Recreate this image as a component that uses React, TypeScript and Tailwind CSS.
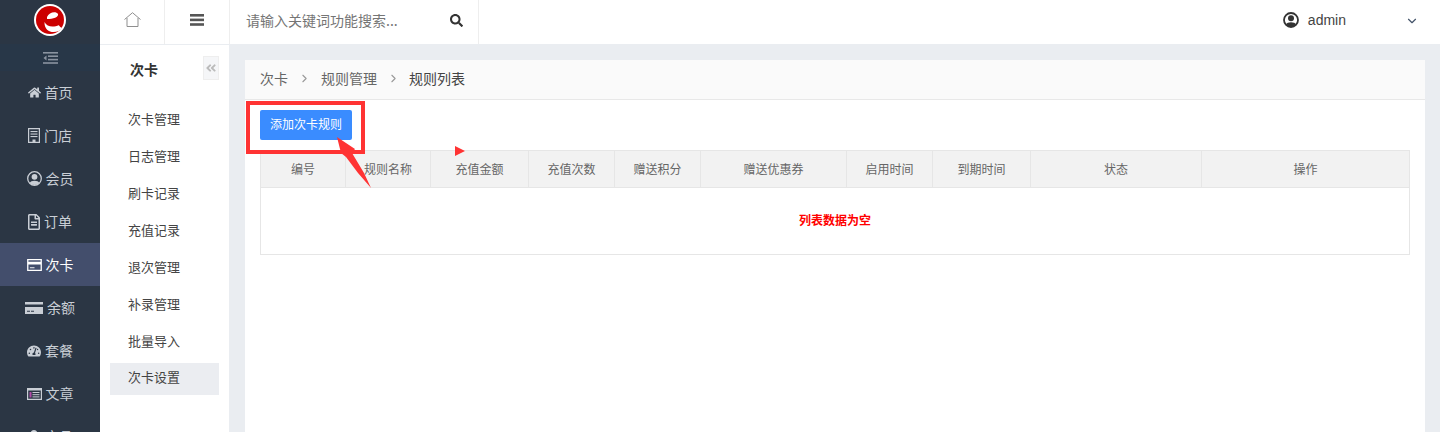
import React from "react";
import { FaHome, FaRegFileAlt, FaTachometerAlt, FaSearch, FaUser, FaAngleDoubleLeft } from "react-icons/fa";
import { LuChevronDown, LuChevronRight } from "react-icons/lu";

const StoreIcon = () => (
  <svg width="12" height="15" viewBox="0 0 12 15" fill="currentColor">
    <path d="M0 0H12V15H0ZM1.2 1.2V13.8H4.5V11.5H7.5V13.8H10.8V1.2Z" fillRule="evenodd" />
    <rect x="2.5" y="3" width="7" height="1.1" />
    <rect x="2.5" y="5.5" width="7" height="1.1" />
    <rect x="2.5" y="8" width="7" height="1.1" />
  </svg>
);

const MemberIcon = () => (
  <svg width="15" height="15" viewBox="0 0 15 15">
    <circle cx="7.5" cy="7.5" r="6.8" fill="none" stroke="currentColor" strokeWidth="1.3" />
    <circle cx="7.5" cy="5.8" r="2.9" fill="currentColor" />
    <path d="M2.8 12 C3.5 9 11.5 9 12.2 12 C10 14.5 5 14.5 2.8 12Z" fill="currentColor" />
  </svg>
);

const CardIcon = () => (
  <svg width="15" height="12" viewBox="0 0 16 13" fill="currentColor">
    <path d="M0 0H16V13H0ZM1.4 6V11.6H14.6V6ZM1.4 1.4V3H14.6V1.4Z" fillRule="evenodd" />
    <rect x="3" y="9" width="5" height="1" />
  </svg>
);

const BalanceIcon = () => (
  <svg width="18" height="12" viewBox="0 0 18 12" fill="currentColor">
    <rect x="0" y="0" width="18" height="2.5" />
    <path d="M0 5H18V12H0ZM2 8.8V9.8H5V8.8ZM6 8.8V9.8H9V8.8Z" fillRule="evenodd" />
  </svg>
);

const ArticleIcon = () => (
  <svg width="15" height="12" viewBox="0 0 15 12" fill="currentColor">
    <path d="M0 0H15V12H0ZM1.2 2.6V10.8H13.8V2.6Z" fillRule="evenodd" />
    <rect x="2.5" y="4" width="2" height="5.5" fill="#b04aa8" />
    <rect x="5.5" y="4" width="7" height="1" />
    <rect x="5.5" y="6.2" width="7" height="1" />
    <rect x="5.5" y="8.4" width="7" height="1" />
  </svg>
);

const navItems = [
  { label: "首页", icon: <FaHome size={13} /> },
  { label: "门店", icon: <StoreIcon /> },
  { label: "会员", icon: <MemberIcon /> },
  { label: "订单", icon: <FaRegFileAlt size={16} className="w-[12px]" /> },
  { label: "次卡", icon: <CardIcon />, active: true },
  { label: "余额", icon: <BalanceIcon /> },
  { label: "套餐", icon: <FaTachometerAlt size={14} /> },
  { label: "文章", icon: <ArticleIcon /> },
  { label: "产品", icon: <FaUser size={14} /> },
];

const subItems = ["次卡管理", "日志管理", "刷卡记录", "充值记录", "退次管理", "补录管理", "批量导入"];

const columns = [
  { label: "编号", w: "w-[85px]" },
  { label: "规则名称", w: "w-[85px]" },
  { label: "充值金额", w: "w-[98px]" },
  { label: "充值次数", w: "w-[86px]" },
  { label: "赠送积分", w: "w-[86px]" },
  { label: "赠送优惠券", w: "w-[146px]" },
  { label: "启用时间", w: "w-[86px]" },
  { label: "到期时间", w: "w-[98px]" },
  { label: "状态", w: "w-[171px]" },
  { label: "操作", w: "flex-1" },
];

export default function App() {
  return (
    <div className="flex h-[432px] w-[1440px] overflow-hidden bg-[#eaedf1] font-['Noto_Sans_CJK_SC','Liberation_Sans',sans-serif] text-[#333]">
      <aside className="w-[100px] shrink-0 bg-[#2b3644]">
        <div className="flex h-[44px] items-center justify-center pb-[4px]">
          <svg width="32" height="32" viewBox="0 0 32 32">
            <circle cx="16" cy="16" r="16" fill="#fff" />
            <circle cx="16" cy="16" r="14" fill="#cc0000" />
            <path d="M13 13 C15 8 22 7 24 10 C25 13 19 15 13 15Z" fill="#fff" />
            <path d="M10.5 18 C13 23.5 20 23.5 25 21 C26 23.5 27.5 24 28.5 23.5 C24 30.5 10 30 10.5 18Z" fill="#fff" />
            <circle cx="26" cy="20" r="1.8" fill="#cc0000" />
          </svg>
        </div>
        <div className="flex h-[27px] items-center justify-center bg-[#283748] text-[#8a93a0]">
          <svg width="15" height="12" viewBox="0 0 15 12" fill="currentColor">
            <rect x="0" y="0" width="15" height="1.6" />
            <rect x="5" y="3.4" width="10" height="1.6" />
            <rect x="5" y="6.8" width="10" height="1.6" />
            <rect x="0" y="10.2" width="15" height="1.6" />
            <path d="M3.5 3.4 L0.5 5.9 L3.5 8.4 Z" />
          </svg>
        </div>
        <nav>
          {navItems.map((item) => (
            <div
              key={item.label}
              className={`flex h-[43px] items-center justify-center gap-[4px] text-[14px] ${item.active ? "bg-[#434e6c] text-white" : "text-[#c9ced5]"}`}
            >
              {item.icon}
              <span>{item.label}</span>
            </div>
          ))}
        </nav>
      </aside>

      <div className="flex min-w-0 flex-1 flex-col">
        <header className="flex h-[45px] shrink-0 items-stretch border-b border-[#eaedf1] bg-white">
          <div className="flex w-[65px] items-center justify-center border-r border-[#eeeeee] pb-[5px] text-[#8f8f8f]">
            <svg width="17" height="15" viewBox="0 0 17 15" fill="none" stroke="currentColor" strokeWidth="1">
              <path d="M0.5 7.5 L8.5 0.7 L16.5 7.5" />
              <path d="M3 6 V14.5 H14 V6" />
            </svg>
          </div>
          <div className="flex w-[65px] items-center justify-center border-r border-[#eeeeee] pb-[5px] text-[#555]">
            <svg width="14" height="12" viewBox="0 0 14 12" fill="currentColor">
              <rect x="0" y="0" width="14" height="2.6" />
              <rect x="0" y="4.6" width="14" height="2.6" />
              <rect x="0" y="9.2" width="14" height="2.6" />
            </svg>
          </div>
          <div className="flex w-[249px] items-center justify-between border-r border-[#eeeeee] pb-[4px] pl-[16px] pr-[15px]">
            <span className="text-[14px] text-[#757575]">请输入关键词功能搜索...</span>
            <FaSearch size={13} className="text-[#333]" />
          </div>
          <div className="flex flex-1 items-center justify-end pb-[3px] pr-[21px]">
            <svg width="16" height="16" viewBox="0 0 16 16" className="mb-[2px] text-[#333]">
              <circle cx="8" cy="8" r="7" fill="none" stroke="currentColor" strokeWidth="1.8" />
              <circle cx="8" cy="6.2" r="3" fill="currentColor" />
              <path d="M3 12.5 C4 9.5 12 9.5 13 12.5 C11 15 5 15 3 12.5Z" fill="currentColor" />
            </svg>
            <span className="ml-[9px] font-['Liberation_Sans',sans-serif] text-[14px] text-[#444]">admin</span>
            <LuChevronDown size={14} className="ml-[59px] text-[#44546a]" />
          </div>
        </header>

        <div className="flex min-h-0 flex-1">
          <div className="relative w-[129px] shrink-0 bg-white px-[10px]">
            <div className="h-[50px] pl-[20px] pt-[14px] text-[14px] font-bold leading-[20px] text-[#333]">次卡</div>
            <button className="absolute right-[10px] top-[11px] flex h-[24px] w-[16px] items-center justify-center border border-[#eeeeee] bg-[#f5f6f8] text-[#bbb]">
              <FaAngleDoubleLeft size={12} />
            </button>
            <ul className="mt-[5px]">
              {subItems.map((s) => (
                <li key={s} className="flex h-[37px] items-center pl-[18px] text-[13px] text-[#444]">
                  {s}
                </li>
              ))}
              <li className="mt-[4px] flex h-[32px] items-center bg-[#ebedf1] pb-[5px] pl-[18px] text-[13px] text-[#444]">次卡设置</li>
            </ul>
          </div>

          <main className="min-w-0 flex-1 pl-[16px] pr-[15px] pt-[15px]">
            <div className="relative h-full bg-white">
              <div className="flex h-[40px] items-center border-b border-[#e8e8e8] bg-[#fafafa] px-[15px] pb-[2px] text-[14px] text-[#666]">
                <span>次卡</span>
                <LuChevronRight size={13} className="mx-[10px] text-[#999]" />
                <span>规则管理</span>
                <LuChevronRight size={13} className="ml-[10px] mr-[9px] text-[#999]" />
                <span className="text-[#444]">规则列表</span>
              </div>
              <div className="px-[15px] pt-[10px]">
                <button className="h-[30px] w-[92px] rounded-[2px] bg-[#3a8cff] pb-[2px] text-[12px] text-white">添加次卡规则</button>
                <div className="mt-[10px] border border-[#e6e6e6]">
                  <div className="flex h-[37px] border-b border-[#e6e6e6] bg-[#f2f2f2]">
                    {columns.map((c) => (
                      <div key={c.label} className={`flex items-center justify-center border-r border-[#e6e6e6] pb-[1px] text-[12px] text-[#666] last:border-r-0 ${c.w}`}>
                        {c.label}
                      </div>
                    ))}
                  </div>
                  <div className="flex h-[66px] items-center justify-center pb-[2px] text-[12px] font-bold text-[#ff0000]">列表数据为空</div>
                </div>
              </div>

              {/* annotation drawn over the page */}
              <div className="absolute left-[1px] top-[41px] h-[53px] w-[119px] border-4 border-[#ff3333]" />
              <svg className="absolute left-[85px] top-[70px]" width="50" height="60" viewBox="0 0 50 60">
                <path d="M7 7 L25 19 L22 23 L34 43 L41 58 L28 43 L16 27 L11 23 Z" fill="#ff3333" />
              </svg>
              <svg className="absolute left-[210px] top-[86px]" width="12" height="12" viewBox="0 0 12 12">
                <path d="M0 0 L10 5 L0 10 Z" fill="#ff3333" />
              </svg>
            </div>
          </main>
        </div>
      </div>
    </div>
  );
}
